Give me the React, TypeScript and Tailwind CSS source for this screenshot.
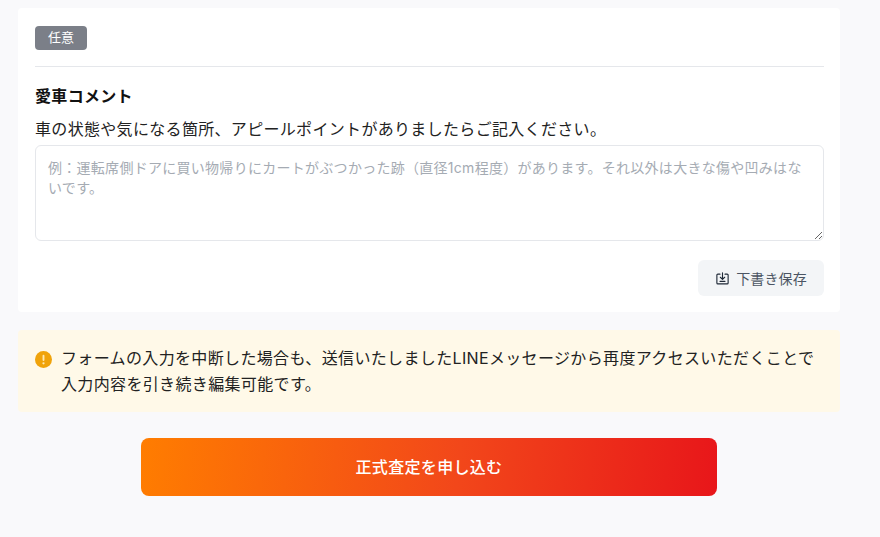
export default function App() {
  const font = { fontFamily: 'Inter, "Noto Sans CJK JP", "Noto Sans", sans-serif' };
  return (
    <div style={font} className="min-h-[537px] w-[880px] overflow-hidden bg-[#f9f9fb] pl-[18px] pt-[8px] text-[#111827]">
      <div className="w-[822px]">
        <section className="h-[304px] rounded-[4px] bg-white pl-[17px] pr-[16px] pt-[18px]">
          <div className="border-b border-[#e5e7eb] pb-[16px]">
            <span className="flex h-[24px] w-[52px] items-center justify-center rounded-[4px] bg-[#7b7f88] text-[13px] text-white">任意</span>
          </div>
          <h3 className="mt-[16px] text-[16px] font-bold leading-[26px] tracking-[0.02em] text-[#111111]">愛車コメント</h3>
          <p className="mt-[8px] text-[16px] leading-[24px] tracking-[0.02em] text-[#222222]">車の状態や気になる箇所、アピールポイントがありましたらご記入ください。</p>
          <textarea
            className="mt-[4px] block h-[96px] w-full rounded-[6px] border border-[#e5e7eb] bg-white px-[12px] pb-[10px] pt-[12px] text-[14px] leading-[20px] tracking-[0.02em] outline-none placeholder:text-[#a5abb3]"
            placeholder="例：運転席側ドアに買い物帰りにカートがぶつかった跡（直径1cm程度）があります。それ以外は大きな傷や凹みはないです。"
          />
          <div className="mt-[19px] flex justify-end">
            <button className="flex h-[36px] w-[126px] items-center justify-center gap-[6px] rounded-[6px] bg-[#f3f5f7] text-[14px] tracking-[0.01em] text-[#4b5563]">
              <svg width="15" height="15" viewBox="0 0 24 24" fill="none" stroke="#1f2937" strokeWidth="1.800" strokeLinecap="round" strokeLinejoin="round">
                <path d="M8 5H4.500A1.500 1.500 0 0 0 3 6.500V19a1.500 1.500 0 0 0 1.500 1.500h15A1.500 1.500 0 0 0 21 19V6.500A1.500 1.500 0 0 0 19.500 5H16" />
                <path d="M12 3v10M8.500 10l3.500 3.500 3.500-3.500" />
                <path d="M8 16.500h8" />
              </svg>
              下書き保存
            </button>
          </div>
        </section>
        <div className="mt-[18px] flex h-[82px] items-start rounded-[4px] bg-[#fff9e8] pl-[17px] pt-[16px]">
          <svg className="mt-[5px] shrink-0" width="17" height="17" viewBox="0 0 18 18">
            <circle cx="9" cy="9" r="9" fill="#f0a30a" />
            <rect x="8" y="4" width="2" height="6.500" rx="1" fill="#ffe9b0" />
            <circle cx="9" cy="13" r="1.200" fill="#ffe9b0" />
          </svg>
          <p className="ml-[9px] text-[16px] leading-[25.6px] tracking-[0.022em] text-[#222222]">
            フォームの入力を中断した場合も、送信いたしましたLINEメッセージから再度アクセスいただくことで<br />入力内容を引き続き編集可能です。
          </p>
        </div>
        <div className="mt-[26px] flex justify-center">
          <button className="h-[58px] w-[576px] rounded-[8px] bg-[linear-gradient(97deg,#ff7d00_0%,#f2471a_55%,#e8161a_100%)] text-[16px] font-medium tracking-[0.02em] text-white">正式査定を申し込む</button>
        </div>
      </div>
    </div>
  );
}
